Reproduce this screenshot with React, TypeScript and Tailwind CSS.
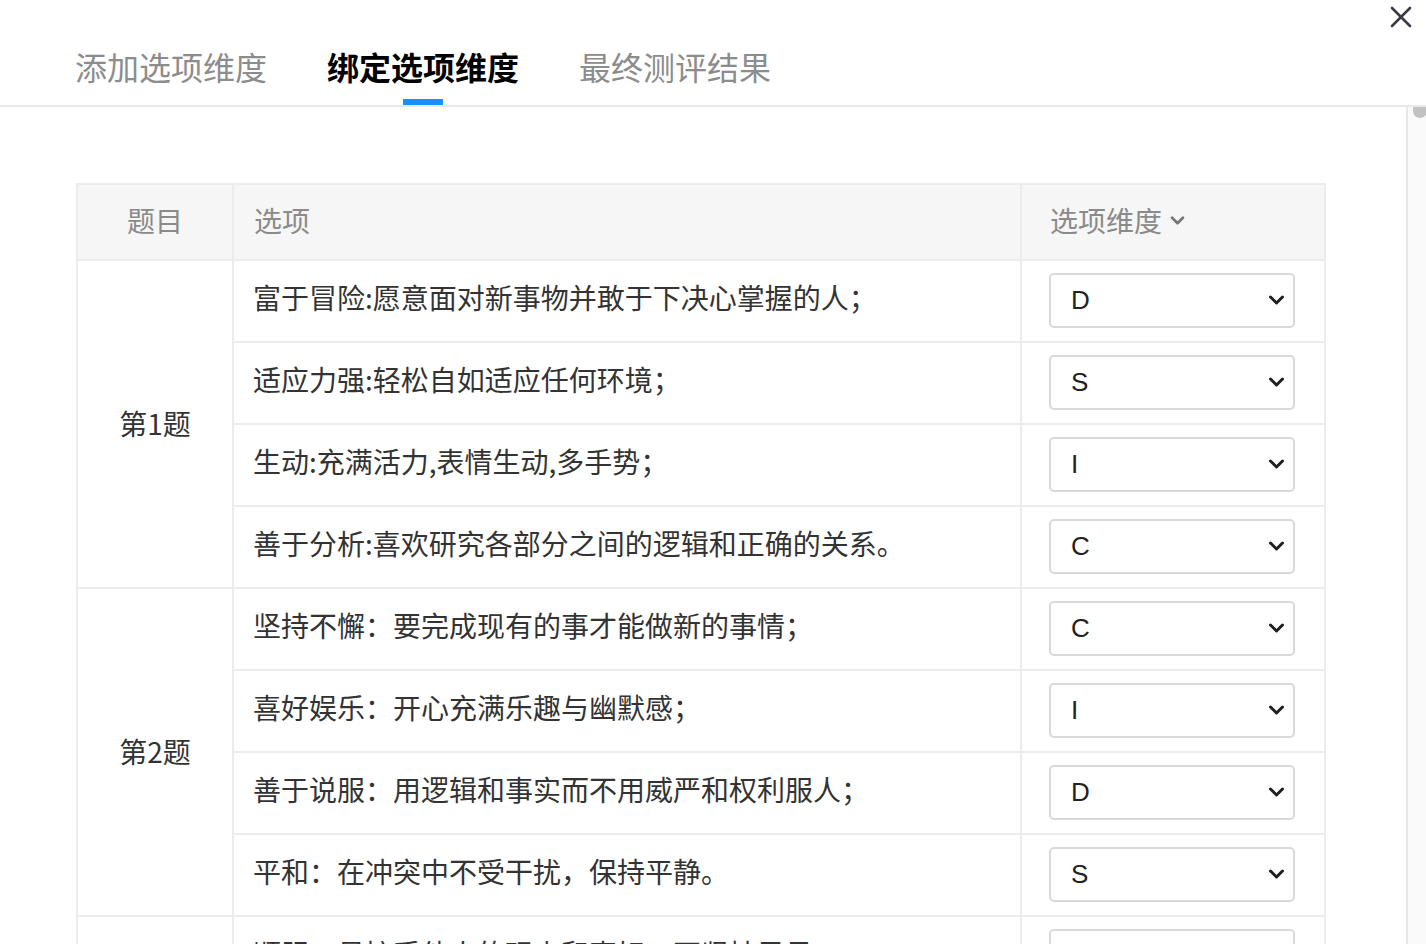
const groups = [
  {
    title: '第1题',
    options: [
      { text: '富于冒险:愿意面对新事物并敢于下决心掌握的人；', value: 'D' },
      { text: '适应力强:轻松自如适应任何环境；', value: 'S' },
      { text: '生动:充满活力,表情生动,多手势；', value: 'I' },
      { text: '善于分析:喜欢研究各部分之间的逻辑和正确的关系。', value: 'C' },
    ],
  },
  {
    title: '第2题',
    options: [
      { text: '坚持不懈：要完成现有的事才能做新的事情；', value: 'C' },
      { text: '喜好娱乐：开心充满乐趣与幽默感；', value: 'I' },
      { text: '善于说服：用逻辑和事实而不用威严和权利服人；', value: 'D' },
      { text: '平和：在冲突中不受干扰，保持平静。', value: 'S' },
    ],
  },
  {
    title: '第3题',
    options: [
      { text: '顺服：易接受他人的观点和喜好，不坚持己见；', value: 'S' },
      { text: '自我牺牲：为他人利益愿意放弃个人意见；', value: 'C' },
    ],
  },
]

const tabs = ['添加选项维度', '绑定选项维度', '最终测评结果']

function Chevron({ className }: { className?: string }) {
  return (
    <svg viewBox="0 0 16 10" className={className} fill="none" stroke="currentColor" strokeWidth="3" strokeLinecap="round" strokeLinejoin="round">
      <path d="M2 2l6 6 6-6" />
    </svg>
  )
}

function DimSelect({ value }: { value: string }) {
  return (
    <div className="flex h-[55px] w-[246px] items-center justify-between rounded-[5px] border-2 border-[#d9d9d9] bg-white pl-[20px] pr-[8px]">
      <span className="text-[26px] leading-none text-[#222]" style={{ fontFamily: '"Liberation Sans", Arial, sans-serif' }}>
        {value}
      </span>
      <Chevron className="h-[10px] w-[17px] text-[#1f1f1f]" />
    </div>
  )
}

export default function App() {
  return (
    <div
      className="flex h-[944px] w-full flex-col overflow-hidden bg-white"
      style={{ fontFamily: '"Noto Sans CJK SC", "Noto Sans", sans-serif' }}
    >
      {/* tabs header */}
      <div className="relative h-[107px] shrink-0 border-b-2 border-[#e9e9e9]">
        <div className="flex h-full items-end gap-[60px] pl-[75px]">
          {tabs.map((t, i) => (
            <div key={t} className="relative flex h-full flex-col items-center justify-end">
              <span
                className={`mb-[17px] text-[32px] leading-[44px] ${
                  i === 1 ? 'font-bold text-black' : 'text-[#8c8c8c]'
                }`}
              >
                {t}
              </span>
              {i === 1 && <span className="absolute bottom-0 h-[6px] w-[40px] bg-[#1890ff]" />}
            </div>
          ))}
        </div>
        <button className="absolute right-[13px] top-[5px] text-[#3a3a48]">
          <svg viewBox="0 0 24 24" className="h-[24px] w-[24px]" fill="none" stroke="currentColor" strokeWidth="2.6" strokeLinecap="round">
            <path d="M3 3l18 18M21 3L3 21" />
          </svg>
        </button>
      </div>

      <div className="flex min-h-0 flex-1">
        <div className="min-w-0 flex-1 overflow-hidden pl-[76px] pt-[76px]">
          <table className="w-[1248px] table-fixed border-collapse border-2 border-[#ececec]">
            <colgroup>
              <col className="w-[156px]" />
              <col className="w-[788px]" />
              <col className="w-[304px]" />
            </colgroup>
            <thead>
              <tr className="h-[76px] bg-[#f6f6f6] text-[28px] text-[#8a8a8a]">
                <th className="border-2 border-[#ececec] pb-[4px] text-center font-normal">题目</th>
                <th className="border-2 border-[#ececec] pb-[4px] pl-[20px] text-left font-normal">选项</th>
                <th className="border-2 border-[#ececec] pb-[4px] pl-[28px] text-left font-normal">
                  <span className="inline-flex items-center gap-[8px]">
                    选项维度
                    <Chevron className="h-[9px] w-[15px] text-[#777]" />
                  </span>
                </th>
              </tr>
            </thead>
            <tbody>
              {groups.map((g) =>
                g.options.map((o, j) => (
                  <tr key={o.text} className="h-[82px]">
                    {j === 0 && (
                      <td
                        rowSpan={g.options.length}
                        className="border-2 border-[#ececec] pb-[2px] text-center align-middle text-[28px] text-[#333]"
                      >
                        {g.title}
                      </td>
                    )}
                    <td className="border-2 border-[#ececec] pb-[8px] pl-[19px] align-middle text-[28px] text-[#333]">
                      {o.text}
                    </td>
                    <td className="border-2 border-[#ececec] pb-[2px] pl-[27px] align-middle">
                      <DimSelect value={o.value} />
                    </td>
                  </tr>
                ))
              )}
            </tbody>
          </table>
        </div>

        {/* scrollbar track */}
        <div className="w-[20px] shrink-0 border-l-2 border-[#e8e8e8] bg-[#fafafa]">
          <div className="ml-[5px] h-[11px] w-[14px] rounded-b-full bg-[#c2c2c2]" />
        </div>
      </div>
    </div>
  )
}
